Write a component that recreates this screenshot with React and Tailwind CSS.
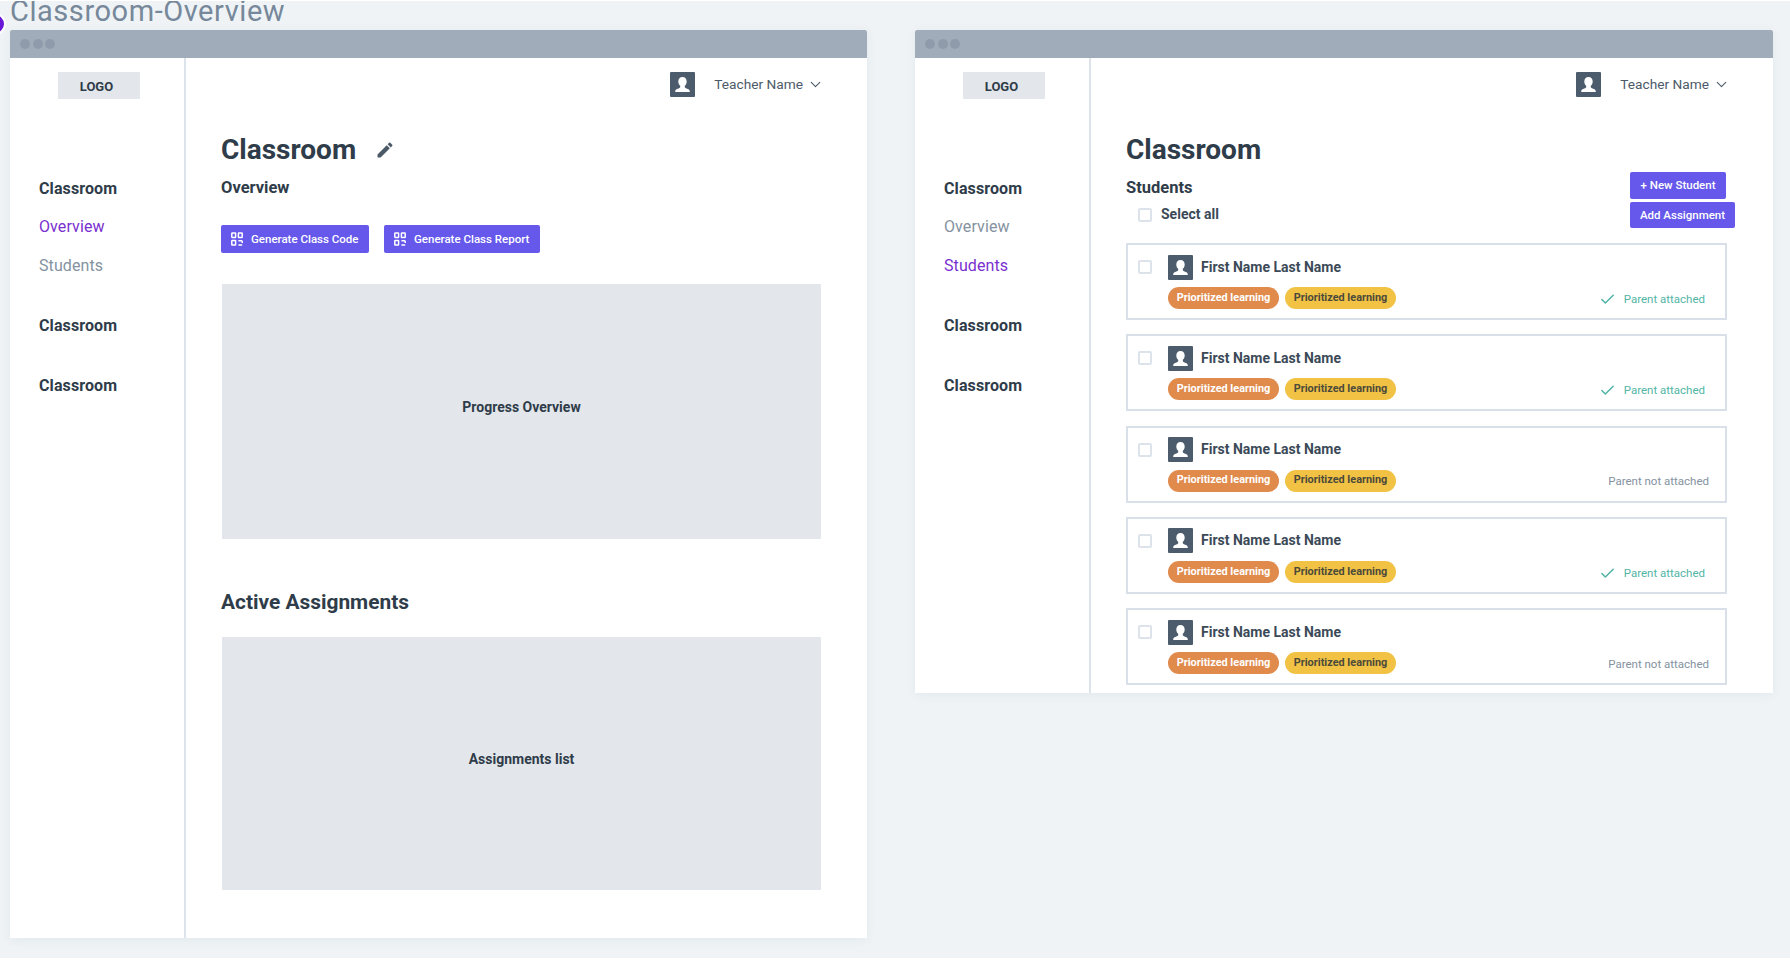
import { Check, ChevronDown } from "lucide-react";

const font = { fontFamily: '"Roboto", "Liberation Sans", sans-serif' };

function Avatar({ className }) {
  return (
    <svg viewBox="0 0 25 25" className={className}>
      <rect width="25" height="25" rx="1" fill="#4c5c6c" />
      <path
        d="M12.5 5c-2.6 0-4.2 1.9-4.2 4.5 0 1.9.7 3.4 1.9 4.3v1.4c-.5 1-2.9 1.4-4.1 2.4-.7.6-.9 1.5-.9 2.4h14.6c0-.9-.2-1.8-.9-2.4-1.2-1-3.6-1.4-4.1-2.4v-1.4c1.2-.9 1.9-2.4 1.9-4.3 0-2.6-1.6-4.5-4.2-4.5z"
        fill="#fff"
      />
    </svg>
  );
}

function QrIcon() {
  return (
    <svg viewBox="0 0 12 14" className="w-[12px] h-[14px]" fill="none" stroke="#fff" strokeWidth="1.5">
      <rect x="0.8" y="1" width="3.8" height="4.4" rx="0.5" />
      <rect x="7.4" y="1" width="3.8" height="4.4" rx="0.5" />
      <rect x="0.8" y="8.6" width="3.8" height="4.4" rx="0.5" />
      <path d="M7.4 8.8h3.8M7.4 13h3.8M11.2 8.8v2.2" />
    </svg>
  );
}

function Sidebar({ active }) {
  const sub = (name) => (active === name ? "text-[#7a2fd0]" : "text-[#84929f]");
  return (
    <aside className="w-[176px] shrink-0 border-r-2 border-[#dde3ea]">
      <div className="ml-[48px] mt-[14px] w-[82px] h-[27px] bg-[#e3e6eb] flex items-center justify-center pr-[5px] pt-[2px] text-[13px] font-bold text-[#2f3c49]">
        LOGO
      </div>
      <nav className="ml-[29px] mt-[80px] text-[16px] leading-5 tracking-[0.1px]">
        <div className="font-bold text-[#2f3c49]">Classroom</div>
        <div className={`mt-[18px] ${sub("Overview")}`}>Overview</div>
        <div className={`mt-[19px] ${sub("Students")}`}>Students</div>
        <div className="mt-[40px] font-bold text-[#2f3c49]">Classroom</div>
        <div className="mt-[40px] font-bold text-[#2f3c49]">Classroom</div>
      </nav>
    </aside>
  );
}

function TopBar() {
  return (
    <div className="h-[28px] bg-[#a0acb9] rounded-t-[2px] flex items-center gap-[2.5px] pl-[10px]">
      <span className="w-[10px] h-[10px] rounded-full bg-[#8f9baa]" />
      <span className="w-[10px] h-[10px] rounded-full bg-[#8f9baa]" />
      <span className="w-[10px] h-[10px] rounded-full bg-[#8f9baa]" />
    </div>
  );
}

function UserMenu() {
  return (
    <div className="flex justify-end items-center h-[25px] -mr-[3px] text-[#4c5a68]">
      <Avatar className="w-[25px] h-[25px]" />
      <span className="ml-[19px] text-[13.7px]">Teacher Name</span>
      <ChevronDown className="ml-[4px] w-[17px] h-[17px]" strokeWidth={1.6} />
    </div>
  );
}

function ClassButton({ label, className }) {
  return (
    <button className={`h-[28px] bg-[#6558ea] rounded-[2px] flex items-center pl-[10px] text-white text-[11.5px] font-medium ${className}`}>
      <QrIcon />
      <span className="ml-[8px] pt-[1px]">{label}</span>
    </button>
  );
}

function Placeholder({ label, className }) {
  return (
    <div className={`ml-[1px] w-[599px] bg-[#e3e6eb] flex items-center justify-center pb-[9px] text-[14px] font-bold text-[#2f3c49] ${className}`}>
      {label}
    </div>
  );
}

function Checkbox() {
  return <span className="w-[14px] h-[14px] shrink-0 rounded-[2px] border-2 border-[#dde3ea] bg-white" />;
}

function StudentCard({ attached }) {
  return (
    <div className="h-[77px] border-2 border-[#d9e0e9] pl-[10px] pt-[9px]">
      <div className="flex items-center h-[26px]">
        <Checkbox />
        <Avatar className="ml-[16px] w-[25px] h-[25px]" />
        <span className="ml-[8px] text-[14px] font-bold text-[#3c4a58]">First Name Last Name</span>
      </div>
      <div className="flex items-center justify-between mt-[7px] ml-[30px]">
        <div className="flex gap-[6px] text-[10.9px] font-bold">
          <span className="w-[111px] h-[22px] rounded-full bg-[#e08a4c] text-white flex items-center justify-center">Prioritized learning</span>
          <span className="w-[111px] h-[22px] rounded-full bg-[#f1c244] text-[#4c4a3a] flex items-center justify-center">Prioritized learning</span>
        </div>
        {attached ? (
          <div className="flex items-center mr-[20px] mt-[3px] text-[#52b5a6] text-[11.5px]">
            <Check className="w-[17px] h-[17px]" strokeWidth={2.2} />
            <span className="ml-[8px]">Parent attached</span>
          </div>
        ) : (
          <span className="mr-[16px] mt-[3px] text-[#84929f] text-[11.5px]">Parent not attached</span>
        )}
      </div>
    </div>
  );
}

export default function App() {
  return (
    <div style={font} className="relative w-[1790px] h-[960px] overflow-hidden bg-[#eff3f6] pl-[10px] border-t border-b-2 border-white">
      <span className="absolute -left-[16px] top-[12px] w-[22px] h-[22px] rounded-full bg-[#6a16d8] border-2 border-white" />
      <h1 className="h-[29px] text-[29px] leading-[21px] tracking-[0.55px] text-[#76889a]">Classroom-Overview</h1>

      <div className="flex items-start gap-[48px]">
        {/* overview window */}
        <section className="w-[857px] bg-white shadow-[0_2px_10px_rgba(40,60,90,0.06)]">
          <TopBar />
          <div className="flex">
            <Sidebar active="Overview" />
            <main className="w-[680px] pl-[35px] pr-[45px] pt-[14px] pb-[48px]">
              <UserMenu />
              <div className="flex items-center h-[32px] mt-[37px]">
                <h2 className="text-[28px] font-bold text-[#2f3c49]">Classroom</h2>
                <svg viewBox="0 0 24 24" className="ml-[19px] w-[20px] h-[20px]" fill="#4c5a68">
                  <path d="M3 17.25V21h3.75L17.81 9.94l-3.75-3.75L3 17.25zM20.71 7.04a1 1 0 0 0 0-1.41l-2.34-2.34a1 1 0 0 0-1.41 0l-1.83 1.83 3.75 3.75 1.83-1.83z" />
                </svg>
              </div>
              <h3 className="mt-[12px] h-[20px] text-[16.5px] leading-5 font-bold text-[#2f3c49]">Overview</h3>
              <div className="flex gap-[15px] mt-[27px]">
                <ClassButton label="Generate Class Code" className="w-[148px]" />
                <ClassButton label="Generate Class Report" className="w-[156px]" />
              </div>
              <Placeholder label="Progress Overview" className="h-[255px] mt-[31px]" />
              <h3 className="mt-[49px] h-[28px] text-[20.9px] leading-7 font-bold text-[#2f3c49]">Active Assignments</h3>
              <Placeholder label="Assignments list" className="h-[253px] mt-[21px]" />
            </main>
          </div>
        </section>

        {/* students window */}
        <section className="w-[858px] bg-white shadow-[0_2px_10px_rgba(40,60,90,0.06)]">
          <TopBar />
          <div className="flex">
            <Sidebar active="Students" />
            <main className="w-[682px] pl-[35px] pr-[46px] pt-[14px] pb-[8px]">
              <UserMenu />
              <h2 className="mt-[37px] h-[32px] leading-8 text-[28px] font-bold text-[#2f3c49]">Classroom</h2>
              <div className="flex justify-between mt-[6px] mb-[15px]">
                <div className="pt-[6px]">
                  <h3 className="h-[20px] text-[16.5px] leading-5 font-bold text-[#2f3c49]">Students</h3>
                  <div className="flex items-center mt-[6px] ml-[12px]">
                    <Checkbox />
                    <span className="ml-[9px] text-[14px] font-bold text-[#3c4a58]">Select all</span>
                  </div>
                </div>
                <div className="w-[97px] flex flex-col gap-[3px] text-white text-[11.5px] font-medium">
                  <button className="w-[96px] h-[27px] pt-[1px] bg-[#6558ea] rounded-[2px]">+ New Student</button>
                  <button className="w-[105px] h-[26px] pt-[1px] bg-[#6558ea] rounded-[2px]">Add Assignment</button>
                </div>
              </div>
              <div className="flex flex-col gap-[14.25px]">
                <StudentCard attached />
                <StudentCard attached />
                <StudentCard />
                <StudentCard attached />
                <StudentCard />
              </div>
            </main>
          </div>
        </section>
      </div>
    </div>
  );
}
